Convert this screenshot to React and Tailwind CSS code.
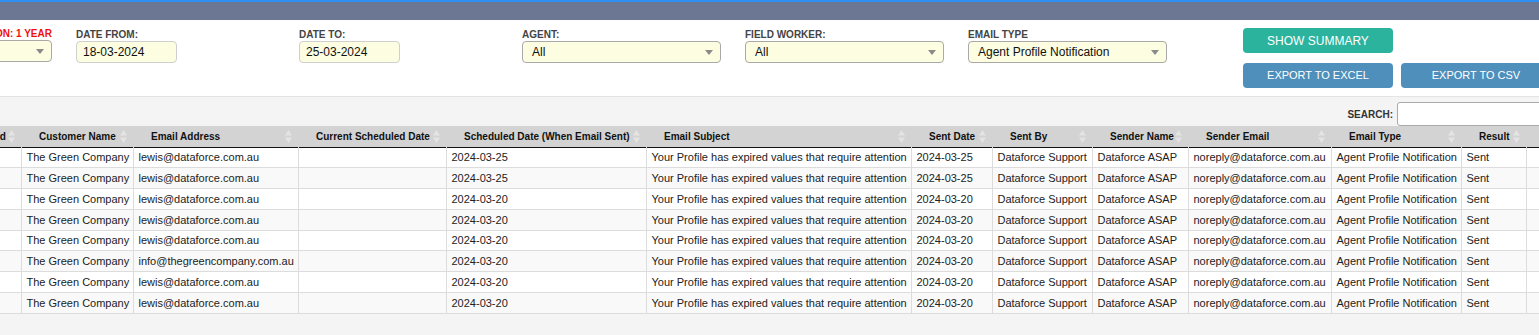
import React from "react";

const font = { fontFamily: '"Liberation Sans", Arial, sans-serif' };

function Caret() {
  return (
    <svg width="8" height="5" viewBox="0 0 8 5" className="shrink-0">
      <polygon points="0,0 8,0 4,5" fill="#8a8a8a" />
    </svg>
  );
}

function SortIcon() {
  return (
    <svg width="7" height="13" viewBox="0 0 7 13" className="shrink-0">
      <polygon points="0,5.5 3.5,0 7,5.5" fill="#e4e4e4" />
      <polygon points="0,7.5 3.5,13 7,7.5" fill="#e4e4e4" />
    </svg>
  );
}

function Select({ value, w = "w-[199px]" }) {
  return (
    <div
      className={`${w} h-[22px] flex items-center justify-between pl-[9px] pr-[7px] bg-[#fdfde1] border border-[#a9a9a9] rounded-[4px] text-[12px] text-[#111]`}
    >
      <span>{value}</span>
      <Caret />
    </div>
  );
}

function DateInput({ value }) {
  return (
    <div className="w-[101px] h-[22px] flex items-center pl-[6px] bg-[#fdfde1] border border-[#cfcfcf] rounded-[4px] text-[12px] text-[#111]">
      {value}
    </div>
  );
}

function Label({ children, red }) {
  return (
    <div
      className={`h-[12px] leading-[12px] text-[10px] font-bold uppercase whitespace-nowrap ${
        red ? "text-[#f01010]" : "text-[#444]"
      }`}
    >
      {children}
    </div>
  );
}

const cols = [
  { name: "Id", w: 42 },
  { name: "Customer Name", w: 112 },
  { name: "Email Address", w: 165 },
  { name: "Current Scheduled Date", w: 148 },
  { name: "Scheduled Date (When Email Sent)", w: 200 },
  { name: "Email Subject", w: 265 },
  { name: "Sent Date", w: 81 },
  { name: "Sent By", w: 100 },
  { name: "Sender Name", w: 96 },
  { name: "Sender Email", w: 143 },
  { name: "Email Type", w: 130 },
  { name: "Result", w: 65 },
  { name: "", w: 60 },
];

const rows = [
  ["lewis@dataforce.com.au", "2024-03-25"],
  ["lewis@dataforce.com.au", "2024-03-25"],
  ["lewis@dataforce.com.au", "2024-03-20"],
  ["lewis@dataforce.com.au", "2024-03-20"],
  ["lewis@dataforce.com.au", "2024-03-20"],
  ["info@thegreencompany.com.au", "2024-03-20"],
  ["lewis@dataforce.com.au", "2024-03-20"],
  ["lewis@dataforce.com.au", "2024-03-20"],
];

export default function App() {
  return (
    <div style={font} className="w-[1539px] h-[335px] overflow-hidden bg-[#f4f4f4]">
      {/* top bars */}
      <div className="h-[2px] bg-[#2f8ff2]" />
      <div className="h-[18px] bg-[#6c7794]" />

      {/* filters */}
      <div className="h-[77px] bg-white border-b border-[#e4e4e4] pt-[8px] flex">
        <div className="ml-[-147px] flex gap-[24px] shrink-0">
          <div className="w-[199px]">
            <div className="flex justify-end">
              <Label red>Retention: 1 Year</Label>
            </div>
            <Select value="" />
          </div>
          <div className="w-[199px] pt-[1px]">
            <Label>Date From:</Label>
            <DateInput value="18-03-2024" />
          </div>
          <div className="w-[199px] pt-[1px]">
            <Label>Date To:</Label>
            <DateInput value="25-03-2024" />
          </div>
          <div className="w-[199px] pt-[1px]">
            <Label>Agent:</Label>
            <Select value="All" />
          </div>
          <div className="w-[199px] pt-[1px]">
            <Label>Field Worker:</Label>
            <Select value="All" />
          </div>
          <div className="w-[199px] pt-[1px]">
            <Label>Email Type</Label>
            <Select value="Agent Profile Notification" />
          </div>
        </div>
        <div className="ml-[76px] shrink-0 grid grid-cols-[150px_150px] gap-x-[8px] gap-y-[10px] content-start">
          <button className="h-[25px] rounded-[4px] bg-[#2cb39e] text-white text-[12px] uppercase">
            Show Summary
          </button>
          <div />
          <button className="h-[25px] rounded-[4px] bg-[#4f8fbb] text-white text-[11px] uppercase">
            Export to Excel
          </button>
          <button className="h-[25px] rounded-[4px] bg-[#4f8fbb] text-white text-[11px] uppercase">
            Export to CSV
          </button>
        </div>
      </div>

      {/* search */}
      <div className="pt-[5px] flex items-center justify-end gap-[4px]">
        <span className="text-[10px] font-bold text-[#333] uppercase">Search:</span>
        <div className="w-[160px] h-[24px] -mr-[18px] bg-white border border-[#aaa] rounded-[3px]" />
      </div>

      {/* table */}
      <div className="ml-[-21px]">
        <table
          className="table-fixed border-collapse text-[11px] text-[#222]"
          style={{ width: cols.reduce((a, c) => a + c.w, 0) }}
        >
          <colgroup>
            {cols.map((c, i) => (
              <col key={i} style={{ width: c.w }} />
            ))}
          </colgroup>
          <thead>
            <tr className="bg-[#d3d3d3] h-[21px] border-b border-[#111]">
              {cols.map((c, i) => (
                <th key={i} className="p-0 font-bold text-[10px] text-[#111] text-left">
                  <div className="h-[20px] flex items-center justify-between pl-[18px] pr-[6px] whitespace-nowrap">
                    <span>{c.name}</span>
                    {c.name && <SortIcon />}
                  </div>
                </th>
              ))}
            </tr>
          </thead>
          <tbody>
            {rows.map((r, i) => {
              const cells = [
                "",
                "The Green Company",
                r[0],
                "",
                r[1],
                "Your Profile has expired values that require attention",
                r[1],
                "Dataforce Support",
                "Dataforce ASAP",
                "noreply@dataforce.com.au",
                "Agent Profile Notification",
                "Sent",
                "",
              ];
              return (
                <tr key={i} className={`${i % 2 === 0 ? "bg-white" : "bg-[#f9f9f9]"} h-[20.75px]`}>
                  {cells.map((c, j) => (
                    <td
                      key={j}
                      className="p-0 pl-[5px] border-b border-r border-[#dcdcdc] whitespace-nowrap overflow-hidden h-[20.75px] leading-[14px]"
                    >
                      {c}
                    </td>
                  ))}
                </tr>
              );
            })}
          </tbody>
        </table>
      </div>
    </div>
  );
}
